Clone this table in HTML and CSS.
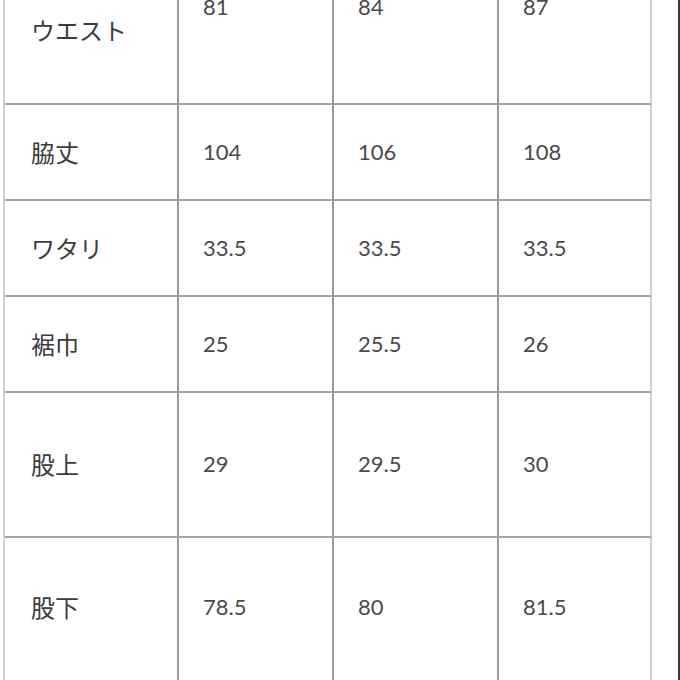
FILE: index.html
```html
<!DOCTYPE html>
<html lang="ja">
<head>
<meta charset="utf-8">
<title>サイズ表</title>
<link rel="stylesheet" href="styles.css">
</head>
<body>
<div class="page">
  <div class="size-table">
    <div class="cell label row-waist">ウエスト</div>
    <div class="cell value row-waist top">81</div>
    <div class="cell value row-waist top">84</div>
    <div class="cell value row-waist top last">87</div>

    <div class="cell label row-std">脇丈</div>
    <div class="cell value row-std">104</div>
    <div class="cell value row-std">106</div>
    <div class="cell value row-std last">108</div>

    <div class="cell label row-std">ワタリ</div>
    <div class="cell value row-std">33.5</div>
    <div class="cell value row-std">33.5</div>
    <div class="cell value row-std last">33.5</div>

    <div class="cell label row-std">裾巾</div>
    <div class="cell value row-std">25</div>
    <div class="cell value row-std">25.5</div>
    <div class="cell value row-std last">26</div>

    <div class="cell label row-tall">股上</div>
    <div class="cell value row-tall">29</div>
    <div class="cell value row-tall">29.5</div>
    <div class="cell value row-tall last">30</div>

    <div class="cell label row-end">股下</div>
    <div class="cell value row-end">78.5</div>
    <div class="cell value row-end">80</div>
    <div class="cell value row-end last">81.5</div>
  </div>
</div>
</body>
</html>
```
FILE: styles.css
```css
html, body {
  margin: 0;
  padding: 0;
  background: #ffffff;
}

.page {
  width: 680px;
  height: 680px;
  box-sizing: border-box;
  border-right: 2px solid #3a3a3a;
  overflow: hidden;
  padding-left: 3px;
  background: #ffffff;
}

.size-table {
  display: grid;
  grid-template-columns: 174px 155px 165px 153px;
  grid-template-rows: 147px 96px 96px 96px 145px 160px;
  margin-top: -42px;
  border-left: 2px solid #d2d2d2;
  width: max-content;
}

.cell {
  box-sizing: border-box;
  display: flex;
  align-items: center;
  border-right: 2px solid #9a9a9a;
  border-bottom: 2px solid #a4a4a4;
  background: #ffffff;
}

.cell.last {
  border-right-color: #cfcfcf;
}

.label {
  padding-left: 26px;
  font-family: "Noto Sans CJK JP", "Noto Sans", sans-serif;
  font-size: 24px;
  line-height: 1.2;
  color: #3c3c3c;
}

.value {
  padding-left: 24px;
  font-family: Lato, "Noto Sans", sans-serif;
  font-size: 22px;
  line-height: 1.2;
  color: #4a4a4a;
}

.value.top {
  align-items: flex-start;
  padding-top: 36px;
}

.row-end {
  align-items: flex-start;
  padding-top: 56px;
}

.label.row-end {
  padding-top: 55px;
}
```
